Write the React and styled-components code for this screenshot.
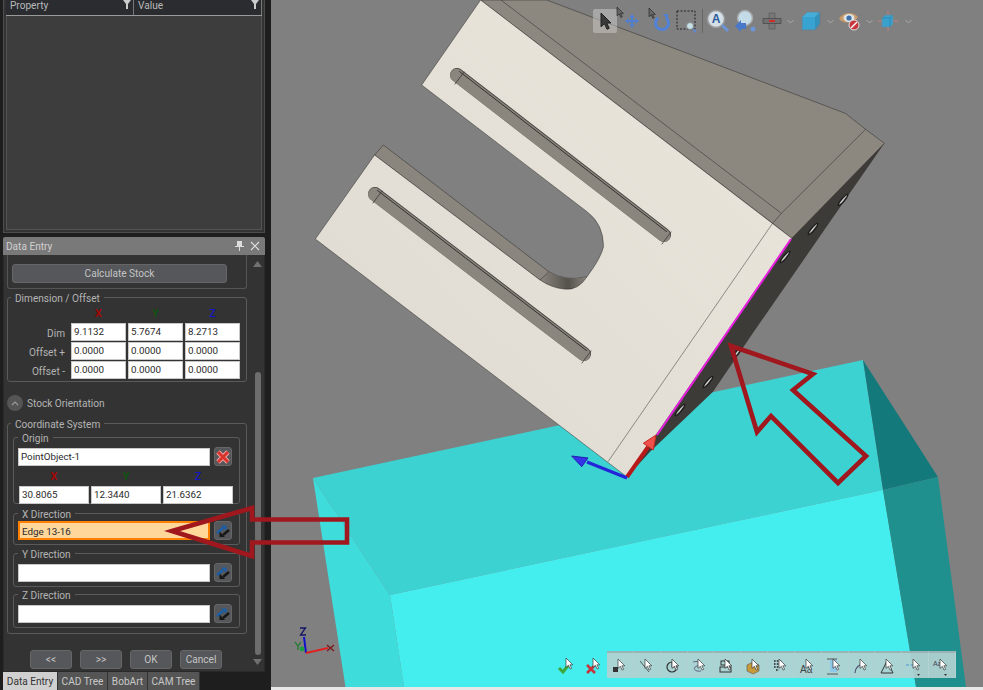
import React from 'react'
import styled, { createGlobalStyle } from 'styled-components'

const GlobalStyle = createGlobalStyle`
  html, body { margin: 0; padding: 0; background: #1e1e1e; }
  * { box-sizing: border-box; }
`

const Page = styled.div`
  position: relative;
  display: flex;
  width: 983px;
  height: 690px;
  overflow: hidden;
  font-family: Roboto, "Liberation Sans", sans-serif;
  font-size: 10.1px;
`
const Sidebar = styled.div`
  width: 271px;
  flex: none;
  display: flex;
  flex-direction: column;
  background: #1e1e1e;
  padding-left: 3px;
`
const PropertyPanel = styled.div`
  width: 262px;
  height: 233px;
  flex: none;
  padding: 0 2px 2px;
  background: #333;
  border: 1px solid #4d4d4d;
  border-top: none;
  display: flex;
  flex-direction: column;
`
const GridHead = styled.div`
  display: flex;
  height: 16px;
  flex: none;
  background: #2a2c30;
  border-bottom: 1px solid #9a9a9a;
`
const HeadCell = styled.div`
  width: ${p => p.$w}px;
  display: flex;
  justify-content: space-between;
  padding: 0 2px 0 4px;
  color: #b9b9b9;
  line-height: 12px;
  border-right: 1px solid #777;
`
const GridBody = styled.div`
  flex: 1;
  background: #3d3d3d;
  border: 1px solid #555;
  border-top: none;
`
const DockHead = styled.div`
  width: 262px;
  height: 18px;
  flex: none;
  margin-top: 4px;
  display: flex;
  align-items: center;
  padding: 0 5px 0 3px;
  background: #797979;
  color: #d0d0d0;
  border-radius: 2px 2px 0 0;
`
const DockTitle = styled.span`
  flex: 1;
`
const DockBody = styled.div`
  width: 262px;
  height: 417px;
  flex: none;
  display: flex;
  background: #333;
  border: 1px solid #2a2a2a;
  border-top: none;
`
const Scroller = styled.div`
  width: 247px;
  flex: none;
  padding-left: 3px;
`
const ScrollTrack = styled.div`
  flex: 1;
  display: flex;
  flex-direction: column;
  align-items: center;
  padding-top: 6px;
`
const ScrollThumb = styled.div`
  width: 6px;
  height: 283px;
  margin: 105px 0 4px;
  background: #6d6d6d;
  border-radius: 3px;
`
const Arrow = styled.svg`
  width: 9px;
  height: 6px;
  flex: none;
`
const TopGroup = styled.div`
  width: 240px;
  height: 34px;
  padding: 9px 0 0 4px;
  border: 1px solid #555;
  border-top: none;
  border-radius: 0 0 3px 3px;
`
const Group = styled.fieldset`
  margin: ${p => p.$top || 0}px 0 0;
  padding: ${p => p.$pad || '0'};
  width: ${p => p.$w || 240}px;
  height: ${p => p.$h}px;
  min-width: 0;
  border: 1px solid #5a5a5a;
  border-radius: 3px;
`
const Legend = styled.legend`
  margin-left: ${p => p.$ml}px;
  padding: 0 4px;
  height: 12px;
  line-height: 15px;
  color: #b3b3b3;
`
const ActionButton = styled.div`
  width: ${p => p.$w}px;
  height: 19px;
  display: flex;
  align-items: center;
  justify-content: center;
  background: #55575a;
  border: 1px solid #666;
  border-radius: 3px;
  color: #c4c4c4;
`
const DimGrid = styled.div`
  display: grid;
  grid-template-columns: 61px 55px 55px 55px;
  grid-template-rows: 19px 18px 18px 18px;
  column-gap: 2px;
  row-gap: 1px;
`
const AxisHead = styled.div`
  height: 12px;
  line-height: 12px;
  text-align: center;
  font-size: 11px;
  font-weight: 500;
  color: ${p => p.$c};
  margin-top: ${p => p.$mt || 0}px;
`
const RowLabel = styled.div`
  text-align: right;
  padding-right: 4px;
  line-height: 21px;
  color: #b3b3b3;
`
const Field = styled.div`
  width: ${p => p.$w ? `${p.$w}px` : 'auto'};
  height: ${p => p.$h || 18}px;
  padding-left: 2px;
  line-height: ${p => (p.$h || 18) - 2}px;
  background: ${p => p.$active ? '#ffd79b' : '#fff'};
  border: ${p => p.$active ? '2px solid #ff8000' : '1px solid #c8c8c8'};
  color: #2a2a2a;
  font-size: 9.8px;
`
const SectionRow = styled.div`
  height: 16px;
  margin-top: 13px;
  display: flex;
  align-items: center;
  gap: 4px;
  color: #b3b3b3;
`
const RoundToggle = styled.div`
  width: 16px;
  height: 16px;
  display: flex;
  align-items: center;
  justify-content: center;
  background: #555;
  border-radius: 50%;
`
const PickRow = styled.div`
  display: flex;
  gap: 4px;
  align-items: center;
`
const IconButton = styled.div`
  width: 18px;
  height: 19px;
  display: flex;
  align-items: center;
  justify-content: center;
  background: #55575a;
  border: 1px solid #666;
  border-radius: 3px;
`
const CoordHeads = styled.div`
  display: grid;
  grid-template-columns: 70px 70px 70px;
  column-gap: 2px;
  margin: 5px 0 3px 1px;
`
const CoordFields = styled.div`
  display: grid;
  grid-template-columns: 70px 70px 70px;
  column-gap: 2px;
  margin-left: 1px;
`
const Footer = styled.div`
  display: flex;
  gap: 8px;
  margin: 16px 0 0 23px;
`
const Tabs = styled.div`
  display: flex;
  height: 18px;
  flex: none;
`
const Tab = styled.div`
  width: ${p => p.$w}px;
  display: flex;
  align-items: center;
  justify-content: center;
  background: ${p => p.$on ? '#d0d0d0' : '#555'};
  color: ${p => p.$on ? '#333' : '#c8c8c8'};
  border-right: 1px solid #333;
`
const Main = styled.div`
  flex: 1;
  display: flex;
  flex-direction: column;
`
const Viewport = styled.div`
  position: relative;
  height: 687px;
  flex: none;
  background: #808080;
`
const SceneSvg = styled.svg`
  display: block;
  width: 712px;
  height: 687px;
`
const BottomStrip = styled.div`
  flex: 1;
  background: #e8e8e8;
`
const TopBar = styled.div`
  position: absolute;
  left: 322px;
  top: 9px;
  display: flex;
  align-items: center;
  height: 24px;
`
const ToolSlot = styled.div`
  width: ${p => p.$w}px;
  height: 24px;
  flex: none;
  display: flex;
  align-items: center;
  justify-content: center;
  border-radius: 2px;
  background: ${p => p.$on ? 'rgba(205, 205, 205, 0.5)' : 'transparent'};
`
const Divider = styled.div`
  width: 1px;
  height: 24px;
  background: #666;
`
const Chevron = styled.svg`
  width: 7px;
  height: 5px;
  overflow: visible;
`
const SnapBar = styled.div`
  position: absolute;
  left: 283px;
  top: 651px;
  display: flex;
  align-items: center;
`
const SnapLoose = styled.div`
  width: 27px;
  height: 27px;
  display: flex;
  align-items: center;
  justify-content: center;
`
const SnapGroup = styled.div`
  margin-left: -1px;
  display: grid;
  grid-template-columns: repeat(13, 1fr);
  width: 349px;
  height: 27px;
  background: rgba(178, 209, 209, 0.93);
`
const SnapItem = styled.div`
  display: flex;
  align-items: center;
  justify-content: center;
  border-top: 2px solid #98b4b4;
  border-right: 1px solid #b2d1d1;
`
const Overlay = styled.svg`
  position: absolute;
  left: 0;
  top: 0;
  width: 983px;
  height: 690px;
  pointer-events: none;
`

const ico = { width: 24, height: 24, viewBox: '0 0 24 24' }

const Ptr = ({ x, y, s = 1, fill = '#333', stroke = '#222' }) => (
  <path transform={`translate(${x} ${y}) scale(${s})`} d="M0 0V11L2.8 8.6 4.8 13 6.6 12.2 4.6 8H8Z" fill={fill} stroke={stroke} strokeWidth="0.8" />
)

const Filter = () => (
  <svg width="8" height="9" viewBox="0 0 8 9"><path d="M0 0H8L5 4V9H3V4Z" fill="#ccc" /></svg>
)

const PickIcon = () => (
  <svg width="14" height="14" viewBox="0 0 14 14">
    <path d="M1 9L7 4" stroke="#1a5fa8" strokeWidth="2.4" />
    <path d="M5 1.5H10.5V7Z" fill="#1a5fa8" />
    <path d="M13 6L7 11" stroke="#161616" strokeWidth="2.4" />
    <path d="M3.5 7.5V13H9Z" fill="#161616" />
  </svg>
)

const RedX = () => (
  <svg width="14" height="14" viewBox="0 0 14 14">
    <path d="M2 2L12 12M12 2L2 12" stroke="#f4a0a0" strokeWidth="5" />
    <path d="M2 2L12 12M12 2L2 12" stroke="#d8332c" strokeWidth="3" />
  </svg>
)

const ChevronDown = () => (
  <Chevron viewBox="0 0 7 5"><path d="M.5 1L3.5 4 6.5 1" fill="none" stroke="#aaa" strokeWidth="1" /></Chevron>
)

const SelectIcon = () => <svg {...ico}><Ptr x={8} y={4} s={1.25} fill="#3b3b3b" /></svg>
const MoveIcon = () => (
  <svg {...ico} style={{ overflow: 'visible' }}>
    <Ptr x={-3} y={-2} s={0.8} fill="#666" />
    <path d="M12 5L15 8.5H13V11H15.5V9L19 12 15.5 15V13H13V15.5H15L12 19 9 15.5H11V13H8.5V15L5 12 8.5 9V11H11V8.5H9Z" fill="#4f7fd0" />
  </svg>
)
const RotateIcon = () => (
  <svg {...ico} style={{ overflow: 'visible' }}>
    <Ptr x={1} y={-1} s={0.8} fill="#666" />
    <path d="M10 9A6.5 6.5 0 1 0 18 9" fill="none" stroke="#4f82d8" strokeWidth="3" />
    <path d="M15 5H20V11Z" fill="#4f82d8" />
  </svg>
)
const ZoomBoxIcon = () => (
  <svg {...ico}>
    <rect x="3" y="2" width="18" height="18" fill="none" stroke="#222" strokeWidth="1" strokeDasharray="2 1.5" />
    <circle cx="16" cy="17" r="3.5" fill="#c8e0e8" stroke="#888" />
    <path d="M19 20L22 23" stroke="#5a8ad0" strokeWidth="2" />
  </svg>
)
const ZoomFitIcon = () => (
  <svg {...ico}>
    <circle cx="10" cy="10" r="8.5" fill="#d4dfe8" stroke="#999" strokeWidth="1.5" />
    <text x="10" y="14" textAnchor="middle" fontFamily="Liberation Sans, sans-serif" fontSize="12" fontWeight="700" fill="#2a5a9a">A</text>
    <path d="M16 16L22 22" stroke="#6b95d6" strokeWidth="3" />
  </svg>
)
const ZoomBackIcon = () => (
  <svg {...ico}>
    <circle cx="12" cy="9" r="7.5" fill="#c4dbe8" stroke="#a8a8a8" strokeWidth="1.5" />
    <path d="M2 17L8 11V14H13V20H8V23Z" fill="#4a78c8" />
    <circle cx="20" cy="20" r="2.5" fill="#6b95d6" />
  </svg>
)
const SectionIcon = () => (
  <svg {...ico}>
    <path d="M9 4H15V20H9Z" fill="#777" stroke="#5a5a5a" strokeWidth="0.7" />
    <path d="M3 9.5H21V14.5H3Z" fill="#707070" stroke="#444" strokeWidth="0.7" />
    <rect x="9" y="11.2" width="6" height="1.6" fill="#e81c1c" />
  </svg>
)
const CubeIcon = () => (
  <svg width="20" height="20" viewBox="0 0 20 20">
    <path d="M1 6L6 1H19L14 6Z" fill="#46acd8" />
    <path d="M14 6L19 1V13L14 19Z" fill="#3292bc" />
    <path d="M1 6H14V19H1Z" fill="#38a2d0" />
    <path d="M1 6L6 1H19V13L14 19H1Z" fill="none" stroke="#6d7a80" strokeWidth="0.6" />
  </svg>
)
const EyeBlockIcon = () => (
  <svg {...ico}>
    <path d="M1 10C5 3 15 2 20 8 17 14 7 16 1 10Z" fill="#c89a6a" />
    <ellipse cx="11" cy="9" rx="5.5" ry="4" fill="#dfe6ea" />
    <circle cx="11" cy="9" r="2.6" fill="#3d6ea8" />
    <circle cx="16" cy="16" r="5" fill="#c8373c" stroke="#ddd" />
    <path d="M13 19L19 13" stroke="#fff" strokeWidth="1.5" />
  </svg>
)
const CubeTargetIcon = () => (
  <svg {...ico}>
    <path d="M12 2V22M2 12H22" stroke="#d88080" strokeWidth="0.8" />
    <path d="M6 9L9 6H17V15L14 18H6Z" fill="#3aa0cc" stroke="#6d8a9a" strokeWidth="0.6" />
    <path d="M6 9H14V18M14 9L17 6" fill="none" stroke="#2a7fa6" strokeWidth="0.6" />
  </svg>
)

const SnapPtr = () => <Ptr x={10} y={5} s={0.85} fill="#fff" stroke="#333" />
const Drop = () => <path d="M14 20H17L15.5 22Z" fill="#333" />
const snapGlyphs = [
  <rect key="g" x="2" y="11" width="5" height="5" fill="#333" />,
  <path key="g" d="M2 5L11 16" stroke="#555" fill="none" />,
  <g key="g" fill="none" stroke="#333" strokeWidth="1.2"><circle cx="7" cy="11" r="5" /><path d="M7 6V11H12" strokeWidth="0.8" /></g>,
  <path key="g" d="M2 6C10 4 11 9 6 10 2 11 2 16 10 15" fill="none" stroke="#557" strokeWidth="0.9" />,
  <g key="g" fill="none" stroke="#333" strokeWidth="1"><rect x="3" y="5" width="8" height="4" /><rect x="2" y="11" width="11" height="5" /></g>,
  <path key="g" d="M2 9L8 6 14 9V15L8 18 2 15Z" fill="#c89b3a" stroke="#555" strokeWidth="0.6" />,
  <path key="g" d="M2 5H10M2 8H10M2 11H8M4 14H7" stroke="#222" strokeWidth="1.6" strokeDasharray="1.6 1.2" fill="none" />,
  <text key="g" x="1" y="17" fontFamily="Liberation Sans, sans-serif" fontSize="10" fill="#444">Aa</text>,
  <g key="g"><rect x="4" y="4" width="7" height="12" fill="#90c8e8" /><path d="M1 3H11M1 18H12" stroke="#555" fill="none" /></g>,
  <path key="g" d="M2 17A9 9 0 0 1 11 8" fill="none" stroke="#446" strokeWidth="1.1" />,
  <path key="g" d="M2 17L8 5 14 17Z" fill="none" stroke="#333" strokeWidth="1" />,
  <path key="g" d="M0 9H9" stroke="#4a9ad0" strokeWidth="1.2" strokeDasharray="3 1.5" />,
  <text key="g" x="0" y="10" fontFamily="Liberation Sans, sans-serif" fontSize="7" fill="#445">Aa</text>,
]

// a slot seen from above: the far wall, a dark edge near the upper side and a seam at each end
const Slot = ({ a, b }) => {
  const line = (dx, dy) => ({ x1: a[0] + dx, y1: a[1] + dy, x2: b[0] + dx, y2: b[1] + dy })
  return (
    <g strokeLinecap="round" fill="none">
      <line {...line(0, 0)} stroke="#4a4844" strokeWidth="14" />
      <line {...line(-0.3, 0.4)} stroke="#8a857d" strokeWidth="13.2" />
      <line {...line(2.6, -3.4)} stroke="#33312e" strokeWidth="1" />
      <path d={`M${a[0] + 7} ${a[1] - 3}L${a[0] - 2} ${a[1] + 9}`} stroke="#3a3835" strokeWidth="0.8" />
      <path d={`M${b[0] + 7} ${b[1] - 3}L${b[0] - 2} ${b[1] + 9}`} stroke="#3a3835" strokeWidth="0.8" />
    </g>
  )
}

const Hole = ({ x, y }) => (
  <g transform={`translate(${x} ${y}) rotate(-50)`}>
    <ellipse rx="8" ry="2.2" fill="#1c1c1a" />
    <ellipse rx="6" ry="0.8" fill="#cfcfcf" />
  </g>
)

const Scene = () => (
  <SceneSvg viewBox="271 0 712 687">
    <defs>
      <linearGradient id="face" x1="1" y1="0" x2="0" y2="1">
        <stop offset="0" stopColor="#ebe6dc" />
        <stop offset="1" stopColor="#dfdad1" />
      </linearGradient>
      <linearGradient id="bend" x1="0" y1="0" x2="1" y2="0">
        <stop offset="0" stopColor="#8a857d" />
        <stop offset="0.6" stopColor="#55524d" />
        <stop offset="1" stopColor="#8a857d" />
      </linearGradient>
    </defs>

    <path d="M313 478L863 360 883 490 390 595Z" fill="#3dd2d2" />
    <path d="M313 478L390 595 404 687H345.5Z" fill="#3fdcdc" />
    <path d="M390 595L883 490 916 687H404Z" fill="#45eeee" />
    <path d="M863 360L938 477 883 490Z" fill="#14797a" />
    <path d="M883 490L938 477 966 687H916Z" fill="#20908f" />

    <path d="M500.9 0H546.8L845.3 113.3 865.6 129.3 884.4 143.3 791.8 238.3 772.6 223.3 480.6 0Z" fill="#8c877f" stroke="#2a2a28" strokeWidth="0.5" />
    <path d="M500.9 0L781.4 213.3M781.4 213.3L865.6 129.3M781.4 213.3L772.6 223.3" stroke="#2a2a28" strokeWidth="0.5" fill="none" />
    <path d="M884.4 143.3L791.8 238.3 627 477 650 451.7 713 391.7 755 330Z" fill="#3d3b37" />
    <Hole x={843} y={200} />
    <Hole x={813} y={229} />
    <Hole x={785} y={257} />
    <Hole x={737} y={353} />
    <Hole x={708} y={382} />
    <Hole x={680} y={410} />

    <path d="M383.4 145L548.8 271.7Q566 282 587 276.7 578 291 564 289 552 288 540 280L374.6 155Z" fill="#8a857d" stroke="#2a2a28" strokeWidth="0.5" />
    <path d="M548.8 271.7Q566 282 587 276.7 578 291 564 289 552 288 540 280Z" fill="url(#bend)" />
    <path d="M480.6 0L421.7 85 587 211.7Q603.5 224 603.5 246.7 601 258 587 276.7 578 291 564 289 552 288 540 280L374.6 155 315.3 239 627 477 791.8 238.3Z" fill="url(#face)" stroke="#2a2a28" strokeWidth="0.5" />
    <path d="M772.6 223.3L608 461.7" stroke="#333" strokeWidth="0.5" fill="none" />
    <path d="M548.8 271.7L540 280" stroke="#333" strokeWidth="0.5" fill="none" />
    <Slot a={[457, 75]} b={[664, 235]} />
    <Slot a={[375, 194]} b={[584, 354]} />

    <path d="M791 239L657 435" stroke="#e81ee0" strokeWidth="2" />
    <path d="M627 477L648 447" stroke="#b81a1a" strokeWidth="4" />
    <path d="M656 435L643.3 443.3 653.3 450Z" fill="#f0504a" stroke="#c82a2a" strokeWidth="1" />
    <path d="M627 478L587 462" stroke="#2424d8" strokeWidth="3.4" />
    <path d="M571.7 456L588 458 581.7 466.7Z" fill="#3434e8" stroke="#2020b0" strokeWidth="1" />

    <path d="M306 653L304 637" stroke="#1010c8" strokeWidth="2" />
    <path d="M300 628H305.5L300.5 635H306" stroke="#141466" strokeWidth="1.3" fill="none" />
    <path d="M306 653L328 648" stroke="#dd2222" strokeWidth="2" />
    <path d="M327 645L334 651M334 645L327 651" stroke="#7a1616" strokeWidth="1.2" />
    <path d="M295 642L298 646 301 642M298 646V650" stroke="#1a7a2a" strokeWidth="1.2" fill="none" />
    <circle cx="302" cy="649" r="2.4" fill="#1ea040" />
  </SceneSvg>
)

const App = () => (
  <Page>
    <GlobalStyle />
    <Sidebar>
      <PropertyPanel>
        <GridHead>
          <HeadCell $w={129}>Property<Filter /></HeadCell>
          <HeadCell $w={129}>Value<Filter /></HeadCell>
        </GridHead>
        <GridBody />
      </PropertyPanel>

      <DockHead>
        <DockTitle>Data Entry</DockTitle>
        <svg width="28" height="10" viewBox="0 0 28 10">
          <path d="M5 0H10V5H12V6H8V10H7V6H3V5H5Z" fill="#ddd" />
          <path d="M19 1L27 9M27 1L19 9" stroke="#e0e0e0" strokeWidth="1.1" />
        </svg>
      </DockHead>
      <DockBody>
        <Scroller>
          <TopGroup><ActionButton $w={215}>Calculate Stock</ActionButton></TopGroup>

          <Group $top={2} $h={91}>
            <Legend $ml={3}>Dimension / Offset</Legend>
            <DimGrid>
              <div />
              <AxisHead $c="#b00000" $mt={5}>X</AxisHead>
              <AxisHead $c="#0a5a0a" $mt={5}>Y</AxisHead>
              <AxisHead $c="#1515c8" $mt={5}>Z</AxisHead>
              <RowLabel>Dim</RowLabel><Field>9.1132</Field><Field>5.7674</Field><Field>8.2713</Field>
              <RowLabel>Offset +</RowLabel><Field>0.0000</Field><Field>0.0000</Field><Field>0.0000</Field>
              <RowLabel>Offset -</RowLabel><Field>0.0000</Field><Field>0.0000</Field><Field>0.0000</Field>
            </DimGrid>
          </Group>

          <SectionRow>
            <RoundToggle>
              <svg width="8" height="5" viewBox="0 0 8 5"><path d="M1 4L4 1 7 4" fill="none" stroke="#999" strokeWidth="1.2" /></svg>
            </RoundToggle>
            Stock Orientation
          </SectionRow>

          <Group $top={6} $h={217} $pad="2px 0 0 5px">
            <Legend $ml={-2}>Coordinate System</Legend>
            <Group $w={227} $h={73} $pad="4px 0 0 4px">
              <Legend $ml={0}>Origin</Legend>
              <PickRow>
                <Field $w={192}>PointObject-1</Field>
                <IconButton><RedX /></IconButton>
              </PickRow>
              <CoordHeads>
                <AxisHead $c="#b00000">X</AxisHead>
                <AxisHead $c="#0a5a0a">Y</AxisHead>
                <AxisHead $c="#1515c8">Z</AxisHead>
              </CoordHeads>
              <CoordFields>
                <Field>30.8065</Field><Field>12.3440</Field><Field>21.6362</Field>
              </CoordFields>
            </Group>
            <Group $top={3} $w={227} $h={38} $pad="2px 0 0 4px">
              <Legend $ml={0}>X Direction</Legend>
              <PickRow>
                <Field $w={192} $h={19} $active>Edge 13-16</Field>
                <IconButton><PickIcon /></IconButton>
              </PickRow>
            </Group>
            <Group $top={2} $w={227} $h={40} $pad="4px 0 0 4px">
              <Legend $ml={0}>Y Direction</Legend>
              <PickRow>
                <Field $w={192} />
                <IconButton><PickIcon /></IconButton>
              </PickRow>
            </Group>
            <Group $top={1} $w={227} $h={40} $pad="4px 0 0 4px">
              <Legend $ml={0}>Z Direction</Legend>
              <PickRow>
                <Field $w={192} />
                <IconButton><PickIcon /></IconButton>
              </PickRow>
            </Group>
          </Group>

          <Footer>
            <ActionButton $w={42}>&lt;&lt;</ActionButton>
            <ActionButton $w={42}>&gt;&gt;</ActionButton>
            <ActionButton $w={42}>OK</ActionButton>
            <ActionButton $w={42}>Cancel</ActionButton>
          </Footer>
        </Scroller>
        <ScrollTrack>
          <Arrow viewBox="0 0 9 6"><path d="M4.5 0L9 6H0Z" fill="#707070" /></Arrow>
          <ScrollThumb />
          <Arrow viewBox="0 0 9 6"><path d="M0 0H9L4.5 6Z" fill="#707070" /></Arrow>
        </ScrollTrack>
      </DockBody>
      <Tabs>
        <Tab $w={55} $on>Data Entry</Tab>
        <Tab $w={50}>CAD Tree</Tab>
        <Tab $w={40}>BobArt</Tab>
        <Tab $w={52}>CAM Tree</Tab>
      </Tabs>
    </Sidebar>

    <Main>
      <Viewport>
        <Scene />
        <TopBar>
          <ToolSlot $w={24} $on><SelectIcon /></ToolSlot>
          <ToolSlot $w={30}><MoveIcon /></ToolSlot>
          <ToolSlot $w={26}><RotateIcon /></ToolSlot>
          <ToolSlot $w={26}><ZoomBoxIcon /></ToolSlot>
          <ToolSlot $w={6}><Divider /></ToolSlot>
          <ToolSlot $w={26}><ZoomFitIcon /></ToolSlot>
          <ToolSlot $w={28}><ZoomBackIcon /></ToolSlot>
          <ToolSlot $w={25}><SectionIcon /></ToolSlot>
          <ToolSlot $w={12}><ChevronDown /></ToolSlot>
          <ToolSlot $w={30}><CubeIcon /></ToolSlot>
          <ToolSlot $w={8}><ChevronDown /></ToolSlot>
          <ToolSlot $w={32}><EyeBlockIcon /></ToolSlot>
          <ToolSlot $w={6}><ChevronDown /></ToolSlot>
          <ToolSlot $w={32}><CubeTargetIcon /></ToolSlot>
          <ToolSlot $w={8}><ChevronDown /></ToolSlot>
        </TopBar>
        <SnapBar>
          <SnapLoose>
            <svg {...ico}>
              <path d="M3 15L7 19 14 10" fill="none" stroke="#3ea83a" strokeWidth="3" />
              <SnapPtr />
            </svg>
          </SnapLoose>
          <SnapLoose>
            <svg {...ico}>
              <path d="M4 12L12 20M12 12L4 20" stroke="#c8323a" strokeWidth="2.6" />
              <SnapPtr />
            </svg>
          </SnapLoose>
          <SnapGroup>
            {snapGlyphs.map((glyph, i) => (
              <SnapItem key={i}>
                <svg {...ico}>
                  <g transform="translate(3 2)">{glyph}</g>
                  <SnapPtr />
                  {i > 10 && <Drop />}
                </svg>
              </SnapItem>
            ))}
          </SnapGroup>
        </SnapBar>
      </Viewport>
      <BottomStrip />
    </Main>

    <Overlay viewBox="0 0 983 690">
      <g fill="none" stroke="#a0181e" strokeWidth="4.6" strokeLinejoin="miter" strokeMiterlimit="12">
        <path d="M172 531L252 508V519.5H347V542.5H252V556Z" />
        <path d="M731 346L813 374 793 390 866 456 838 483 771 416 757 432Z" />
      </g>
    </Overlay>
  </Page>
)

export default App
